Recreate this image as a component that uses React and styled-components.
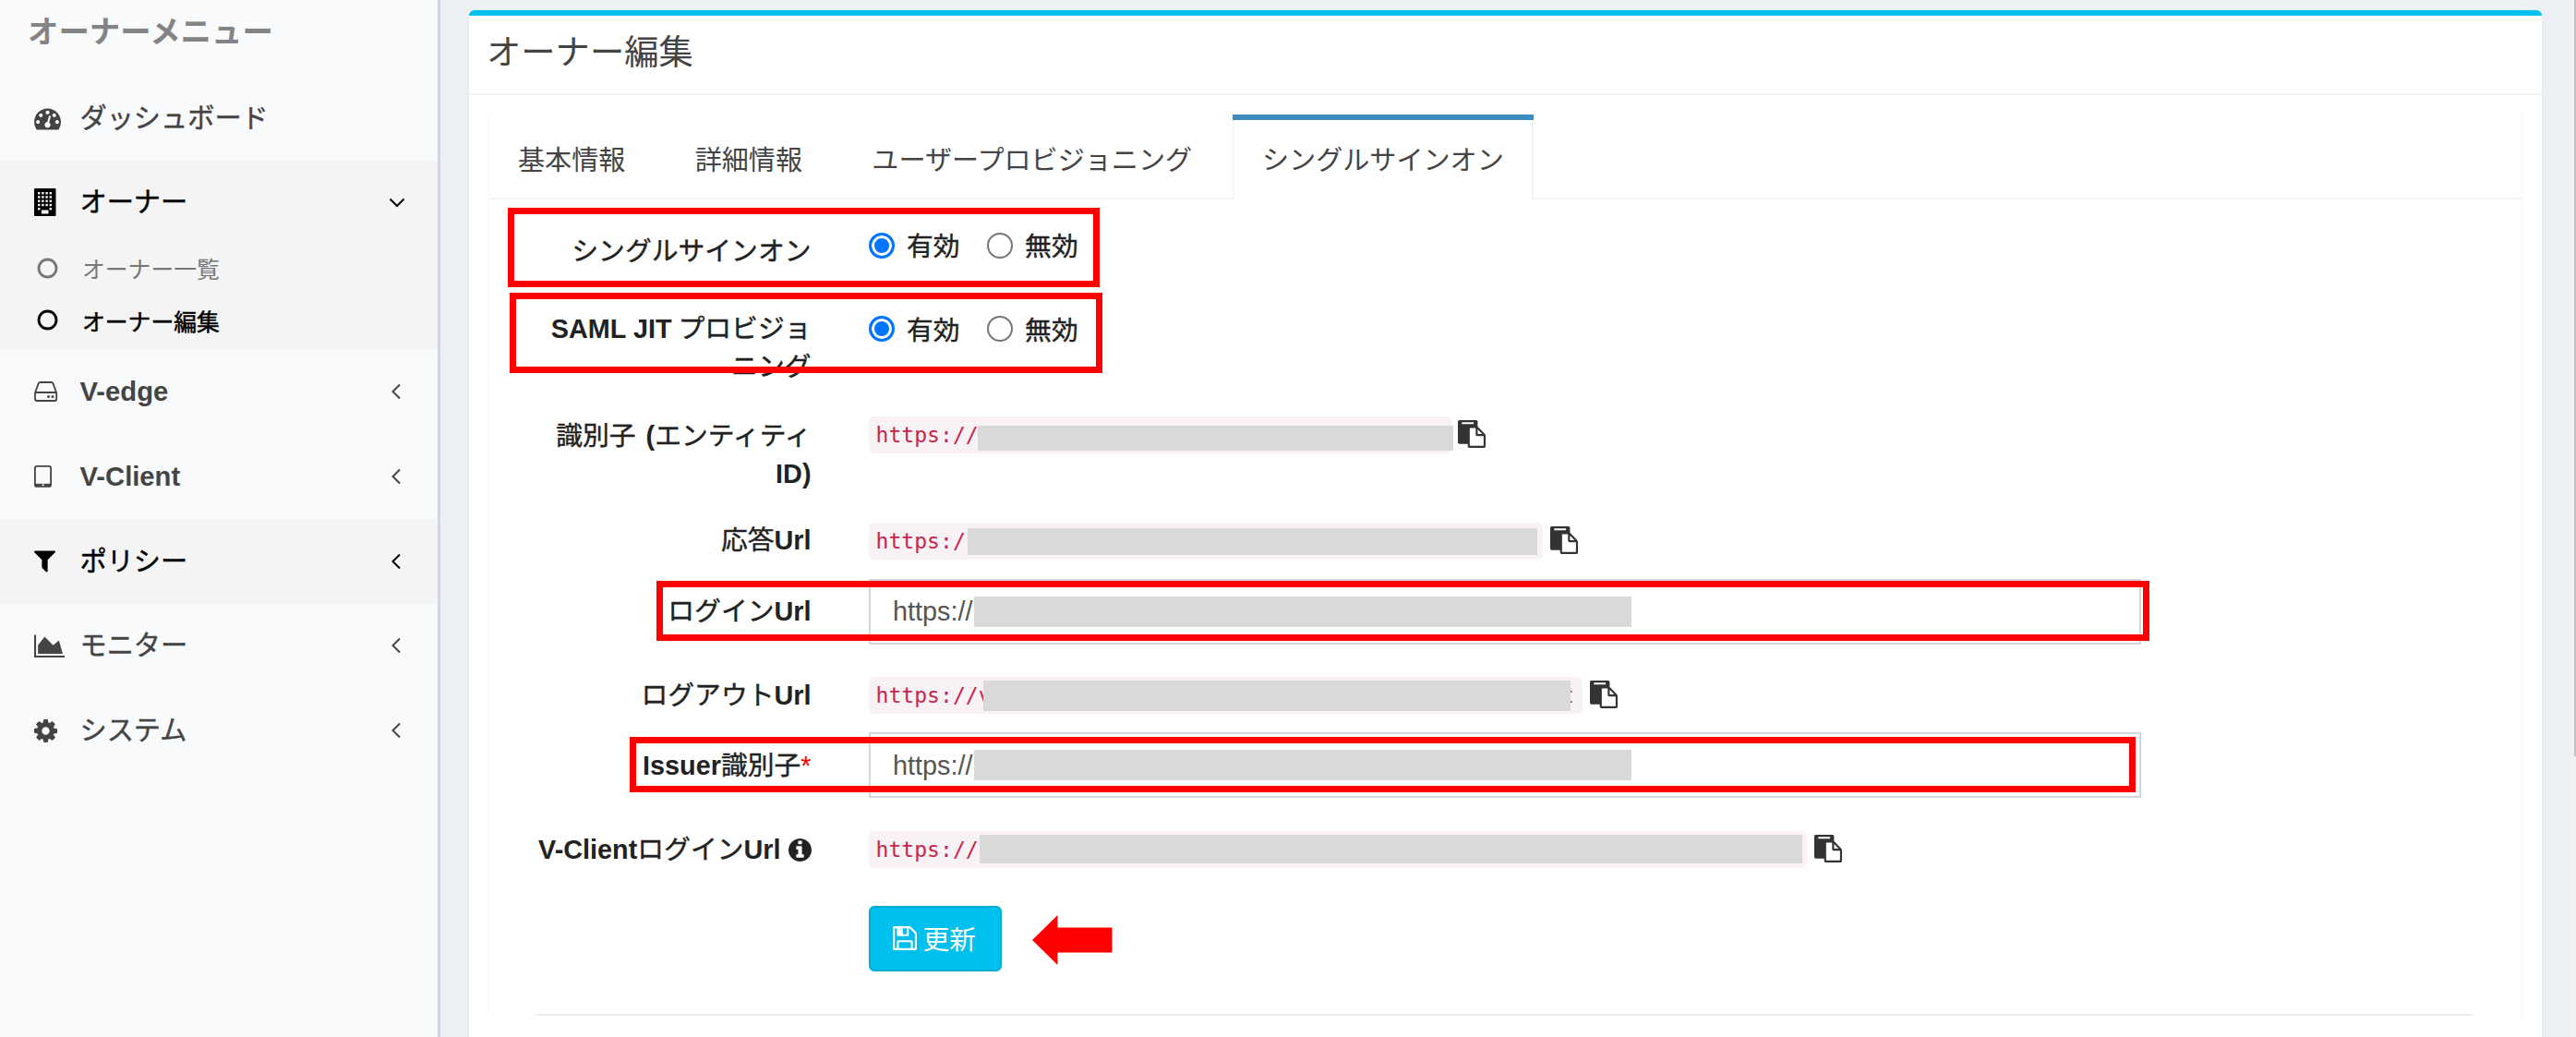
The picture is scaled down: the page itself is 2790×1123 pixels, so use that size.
import React from "react";
import styled, { createGlobalStyle, css } from "styled-components";

const GlobalStyle = createGlobalStyle`
  * {
    box-sizing: border-box;
  }

  body {
    margin: 0;
    overflow: hidden;
    background: #ecf0f5;
    color: #333;
    font-family: "Liberation Sans", "Noto Sans CJK JP", sans-serif;
    font-size: 28.8px;
  }
`;

const Page = styled.div`
  position: relative;
  display: flex;
  width: 2790px;
  height: 1123px;
  overflow: hidden;
`;

/* ---------- sidebar ---------- */

const Sidebar = styled.aside`
  flex: none;
  width: 477px;
  height: 100%;
  background: #f9fafc;
  border-right: 3px solid #d2d6de;
`;

const SidebarTitle = styled.h4`
  margin: 0;
  height: 82px;
  padding-left: 30px;
  font-size: 33.4px;
  line-height: 70px;
  font-weight: bold;
  color: #848484;
`;

const MenuItem = styled.div`
  display: flex;
  align-items: center;
  height: ${props => props.$height || 91.75}px;
  padding: 0 35px 0 37px;
  font-size: 29.2px;
  color: ${props => (props.$active ? "#000" : "#444")};
  background: ${props => (props.$active ? "#f4f4f5" : "none")};
  -webkit-text-stroke: 0.4px;
`;

const MenuIcon = styled.span`
  display: flex;
  align-items: center;
  width: 49.5px;
  padding-top: ${props => props.$drop || 0}px;
`;

const MenuText = styled.span`
  flex: 1;
  line-height: 44px;
`;

const SubMenu = styled.div`
  height: 113.5px;
  background: #f4f4f5;
`;

const SubItem = styled.div`
  display: flex;
  align-items: center;
  height: 56.5px;
  padding: 0 0 6px 40px;
  gap: 26px;
  font-size: 24.8px;
  color: ${props => (props.$active ? "#000" : "#777")};
  ${props => props.$active && css`-webkit-text-stroke: 0.5px;`}
`;

/* Latin runs are set bold, the kana and kanji keep their own weight */
const Latin = styled.b`
  font-weight: bold;
  -webkit-text-stroke: 0;
  margin-right: ${props => props.$after || 0}px;
  margin-left: ${props => props.$before || 0}px;
`;

/* ---------- content box ---------- */

const Content = styled.main`
  flex: 1;
  padding: 11px 31px 0 31px;
`;

const Box = styled.section`
  height: 1200px;
  width: 2244.5px;
  background: #fff;
  border-top: 6px solid #00c0ef;
  border-radius: 6px;
  box-shadow: 0 1px 2px rgba(0, 0, 0, 0.1);
`;

const BoxHeader = styled.h3`
  margin: 0;
  height: 86px;
  padding-left: 19px;
  border-bottom: 2px solid #f4f4f4;
  font-size: 37.3px;
  line-height: 80px;
  font-weight: normal;
  color: #444;
`;

const TabPanel = styled.div`
  margin: 21px 20px 0 19.5px;
  border: solid #fbfbfb;
  border-width: 0 2px;
`;

const Tabs = styled.nav`
  display: flex;
  height: 92px;
  border-bottom: 2px solid #f4f4f4;
`;

const Tab = styled.a`
  height: 92px;
  margin-right: 9.3px;
  padding: ${props => (props.$active ? "0 32px" : "0 34.5px 0 31.5px")};
  border: solid transparent;
  border-width: 6px 0 0;
  font-size: 29.1px;
  line-height: 89px;
  color: #444;
  ${props => props.$active && css`
    background: #fff;
    border-top-color: #3c8dbc;
    box-shadow: inset 2px 0 #f4f4f4, inset -2px 0 #f4f4f4;
  `}
`;

/* ---------- form ---------- */

const Form = styled.div`
  margin: 29px 53px 0 50.5px;
`;

const Row = styled.div`
  display: flex;
  align-items: flex-start;
  height: ${props => props.$height}px;
`;

const Label = styled.label`
  flex: none;
  width: 298.5px;
  margin-right: 62.5px;
  padding-top: ${props => props.$top || 1}px;
  line-height: 41px;
  text-align: right;
  white-space: nowrap;
  color: #222;
  -webkit-text-stroke: 0.4px;
`;

const Required = styled.span`
  color: #f00;
  -webkit-text-stroke: 0;
`;

const Value = styled.div`
  display: flex;
  padding-top: ${props => props.$top || 0}px;
`;

const Option = styled.span`
  display: flex;
  align-items: center;
  height: 40px;
  margin-right: 29.5px;
  color: #222;
  -webkit-text-stroke: 0.4px;
`;

const OptionText = styled.span`
  padding-bottom: 2px;
`;

const Radio = styled.i`
  width: 28px;
  height: 28px;
  margin: 0 13.5px 0 -0.5px;
  border: ${props => (props.$on ? "3px solid #0075ff" : "2px solid #767676")};
  border-radius: 50%;
  background: ${props => (props.$on ? "#0075ff" : "#fff")};
  box-shadow: ${props => (props.$on ? "inset 0 0 0 3px #fff" : "none")};
`;

const Code = styled.code`
  display: flex;
  align-items: center;
  width: ${props => props.$width}px;
  height: 40px;
  padding-left: 7.5px;
  border-radius: 6px;
  background: #f9f2f4;
  color: #c7254e;
  font-family: "DejaVu Sans Mono", monospace;
  font-size: 23.1px;
  line-height: 42px;
`;

const Mask = styled.span`
  position: relative;
  flex: none;
  width: ${props => props.$width}px;
  height: ${props => props.$height}px;
  margin-top: ${props => props.$top || 0}px;
  background: #d9d9d9;
`;

const CodeText = styled.span`
  flex: none;
  width: ${props => props.$width}px;
`;

/* last letter, mostly tucked under the mask before it */
const CodeTail = styled.span`
  margin-left: -10px;
`;

const CopyIcon = styled.span`
  display: flex;
  padding: ${props => props.$top}px 0 0 ${props => props.$left}px;
  color: #333;
`;

const Input = styled.div`
  display: flex;
  align-items: center;
  width: 1378px;
  height: 71px;
  padding-left: 24px;
  border: 2px solid #d2d6de;
  color: #555;
  background: #fff;
`;

const InputText = styled.span`
  width: 87.5px;
  padding-top: 1px;
`;

const Actions = styled.div`
  display: flex;
  align-items: center;
  height: 117px;
  padding: 0 0 46px 361px;
`;

const SaveButton = styled.button`
  display: flex;
  align-items: center;
  width: 144px;
  height: 71px;
  padding: 0 0 2px 24px;
  gap: 6.5px;
  border: 2px solid #00acd6;
  border-radius: 6px;
  background: #00c0ef;
  color: #fff;
  font: inherit;
`;

const Arrow = styled.svg`
  display: block;
  margin: 2px 0 0 33px;
`;

const Divider = styled.hr`
  margin: 0;
  border: 0;
  border-top: 2px solid #eee;
`;

/* red frames drawn over the form */
const Highlight = styled.div`
  position: absolute;
  left: ${props => props.$x}px;
  top: ${props => props.$y}px;
  width: ${props => props.$w}px;
  height: ${props => props.$h}px;
  border: 7px solid #f00;
`;

const Scrollbar = styled.div`
  flex: none;
  width: 7px;
  padding-left: 4px;
  background: #f1f1f1;
`;

const Thumb = styled.div`
  height: 819px;
  background: #c1c1c1;
`;

/* ---------- icons ---------- */

const paths = {
  dashboard:
    "M384 1152q0-53-37.5-90.5t-90.5-37.5-90.5 37.5-37.5 90.5 37.5 90.5 90.5 37.5 90.5-37.5 37.5-90.5zm192-448q0-53-37.5-90.5t-90.5-37.5-90.5 37.5-37.5 90.5 37.5 90.5 90.5 37.5 90.5-37.5 37.5-90.5zm428 481l101-382q6-26-7.5-48.5t-38.5-29.5-48 6.5-30 39.5l-101 382q-60 5-107 43.5t-63 98.5q-20 77 20 146t117 89 146-20 89-117q16-60-6-117t-72-91zm660-33q0-53-37.5-90.5t-90.5-37.5-90.5 37.5-37.5 90.5 37.5 90.5 90.5 37.5 90.5-37.5 37.5-90.5zm-640-640q0-53-37.5-90.5t-90.5-37.5-90.5 37.5-37.5 90.5 37.5 90.5 90.5 37.5 90.5-37.5 37.5-90.5zm448 192q0-53-37.5-90.5t-90.5-37.5-90.5 37.5-37.5 90.5 37.5 90.5 90.5 37.5 90.5-37.5 37.5-90.5zm320 448q0 261-141 483-19 29-54 29h-1402q-35 0-54-29-141-221-141-483 0-182 71-348t191-286 286-191 348-71 348 71 286 191 191 286 71 348z",
  filter:
    "M1595 295q17 41-14 70l-493 493v742q0 42-39 59-13 5-25 5-27 0-45-19l-256-256q-19-19-19-45v-486l-493-493q-31-29-14-70 17-39 59-39h1280q42 0 59 39z",
  area: "M2048 1536v128h-2048v-1536h128v1408h1920zm-384-1024l256 896h-1664v-576l448-576 576 576z",
  cog: "M1152 896q0-106-75-181t-181-75-181 75-75 181 75 181 181 75 181-75 75-181zm512-109v222q0 12-8 23t-20 13l-185 28q-19 54-39 91 35 50 107 138 10 12 10 25t-9 23q-27 37-99 108t-94 71q-12 0-26-9l-138-108q-44 23-91 38-16 136-29 186-7 28-36 28h-222q-14 0-24.5-8.5t-11.5-21.5l-28-184q-49-16-90-37l-141 107q-10 9-25 9-14 0-25-11-126-114-165-168-7-10-7-23 0-12 8-23 15-21 51-66.5t54-70.5q-27-50-41-99l-183-27q-13-2-21-12.5t-8-23.5v-222q0-12 8-23t19-13l186-28q14-46 39-92-40-57-107-138-10-12-10-24 0-10 9-23 26-36 98.5-107.5t94.5-71.5q13 0 26 10l138 107q44-23 91-38 16-136 29-186 7-28 36-28h222q14 0 24.5 8.5t11.5 21.5l28 184q49 16 90 37l142-107q9-9 24-9 13 0 25 10 129 119 165 170 7 8 7 22 0 12-8 23-15 21-51 66.5t-54 70.5q26 50 41 98l183 28q13 2 21 12.5t8 23.5z",
  info: "M1152 1376v-160q0-14-9-23t-23-9h-96v-512q0-14-9-23t-23-9h-320q-14 0-23 9t-9 23v160q0 14 9 23t23 9h96v320h-96q-14 0-23 9t-9 23v160q0 14 9 23t23 9h448q14 0 23-9t9-23zm-128-896v-160q0-14-9-23t-23-9h-192q-14 0-23 9t-9 23v160q0 14 9 23t23 9h192q14 0 23-9t9-23zm640 416q0 209-103 385.5t-279.5 279.5-385.5 103-385.5-103-279.5-279.5-103-385.5 103-385.5 279.5-279.5 385.5-103 385.5 103 279.5 279.5 103 385.5z",
  save: "M512 1536h768v-384h-768v384zm896 0h128v-896q0-14-10-38.5t-20-34.5l-281-281q-10-10-34-20t-39-10v416q0 40-28 68t-68 28h-576q-40 0-68-28t-28-68v-416h-128v1280h128v-416q0-40 28-68t68-28h832q40 0 68 28t28 68v416zm-384-928v-320q0-13-9.5-22.5t-22.5-9.5h-192q-13 0-22.5 9.5t-9.5 22.5v320q0 13 9.5 22.5t22.5 9.5h192q13 0 22.5-9.5t9.5-22.5zm640 32v928q0 40-28 68t-68 28h-1344q-40 0-68-28t-28-68v-1344q0-40 28-68t68-28h928q40 0 88 20t76 48l280 280q28 28 48 76t20 88z",
  paste:
    "M768 1664h896v-640h-416q-40 0-68-28t-28-68v-416h-384v1152zm256-1440v-64q0-13-9.5-22.5t-22.5-9.5h-704q-13 0-22.5 9.5t-9.5 22.5v64q0 13 9.5 22.5t22.5 9.5h704q13 0 22.5-9.5t9.5-22.5zm256 672h299l-299-299v299zm512 128v672q0 40-28 68t-68 28h-960q-40 0-68-28t-28-68v-160h-544q-40 0-68-28t-28-68v-1344q0-40 28-68t68-28h1088q40 0 68 28t28 68v328q21 13 36 28l408 408q28 28 48 76t20 88z"
};

const Glyph = ({ name, box, width, height }) => (
  <svg width={width} height={height} viewBox={box} fill="currentColor" stroke="none">
    <path d={paths[name]} />
  </svg>
);

const BuildingIcon = () => (
  <svg width="24" height="30" viewBox="0 0 24 30">
    <rect width="23.5" height="30" rx="1" fill="currentColor" />
    {[4, 8.2, 12.5, 16.8, 21].map(y =>
      [4, 8.2, 12.4, 16.6].map(x =>
        y === 21 && x > 4 && x < 16 ? null : (
          <rect key={x + "-" + y} x={x} y={y} width="2.4" height="2.4" fill="#f4f4f5" />
        )
      )
    )}
    <rect x="8" y="23.5" width="7.5" height="4" fill="#f4f4f5" />
  </svg>
);

const DriveIcon = () => (
  <svg width="26" height="22" viewBox="0 0 26 22" fill="none" stroke="currentColor" strokeWidth="1.8">
    <path d="M1 12.5L4.6 2.4Q5.1 1 6.6 1h12Q20 1 20.5 2.4L24.2 12.5V19q0 2-2 2H3q-2 0-2-2zM1.4 12h22.4" />
    <circle cx="15.5" cy="16.5" r="1.5" fill="currentColor" stroke="none" />
    <circle cx="20" cy="16.5" r="1.5" fill="currentColor" stroke="none" />
  </svg>
);

const TabletIcon = () => (
  <svg width="19" height="24" viewBox="0 0 19 24">
    <rect x="0.9" y="0.9" width="17.2" height="22" rx="2" fill="none" stroke="currentColor" strokeWidth="1.8" />
    <rect x="1" y="19.8" width="17" height="3.2" fill="currentColor" />
    <rect x="8.6" y="20.4" width="2" height="1.6" fill="#f9fafc" />
  </svg>
);

const RingIcon = () => (
  <svg width="23" height="23" viewBox="0 0 23 23">
    <circle cx="11.5" cy="11.5" r="9.5" fill="none" stroke="currentColor" strokeWidth="2.8" />
  </svg>
);

const Chevron = ({ down }) => (
  <svg
    width="18"
    height="18"
    viewBox="0 0 18 18"
    fill="none"
    stroke="currentColor"
    strokeWidth="2"
  >
    <path d={down ? "M1.5 5.5L9 13L16.5 5.5" : "M12 1.5L4.5 9L12 16.5"} />
  </svg>
);

const LabelInfo = styled.span`
  display: inline-flex;
  margin-left: 8px;
  vertical-align: -3px;
`;

/* ---------- data ---------- */

const menu = [
  { text: <Latin>V-edge</Latin>, icon: <DriveIcon /> },
  { text: <Latin>V-Client</Latin>, icon: <TabletIcon />, drop: -4 },
  {
    text: "ポリシー",
    active: true,
    icon: <Glyph name="filter" box="192 256 1408 1408" width={23} height={24} />
  },
  {
    text: "モニター",
    icon: <Glyph name="area" box="0 128 2048 1536" width={33} height={25.5} />
  },
  {
    text: "システム",
    icon: <Glyph name="cog" box="128 128 1536 1536" width={25} height={25} />
  }
];

const frames = [
  { x: 550, y: 225, w: 641, h: 86 },
  { x: 552, y: 317, w: 642, h: 87 },
  { x: 711, y: 629, w: 1617, h: 65 },
  { x: 682, y: 798, w: 1631, h: 60 }
];

const OnOff = ({ top }) => (
  <Value $top={top}>
    <Option>
      <Radio $on />
      <OptionText>有効</OptionText>
    </Option>
    <Option>
      <Radio />
      <OptionText>無効</OptionText>
    </Option>
  </Value>
);

const CopyButton = ({ left, top = 4 }) => (
  <CopyIcon $left={left} $top={top}>
    <Glyph name="paste" box="0 0 1792 1792" width={30} height={30} />
  </CopyIcon>
);

export default function App() {
  return (
    <Page>
      <GlobalStyle />
      <Sidebar>
        <SidebarTitle>オーナーメニュー</SidebarTitle>
        <MenuItem>
          <MenuIcon $drop={3}>
            <Glyph name="dashboard" box="0 256 1792 1408" width={29} height={24} />
          </MenuIcon>
          <MenuText>ダッシュボード</MenuText>
        </MenuItem>
        <MenuItem $active $height={91}>
          <MenuIcon>
            <BuildingIcon />
          </MenuIcon>
          <MenuText>オーナー</MenuText>
          <Chevron down />
        </MenuItem>
        <SubMenu>
          <SubItem>
            <RingIcon />
            オーナー一覧
          </SubItem>
          <SubItem $active>
            <RingIcon />
            オーナー編集
          </SubItem>
        </SubMenu>
        {menu.map((item, i) => (
          <MenuItem key={i} $active={item.active}>
            <MenuIcon $drop={item.drop}>{item.icon}</MenuIcon>
            <MenuText>{item.text}</MenuText>
            <Chevron />
          </MenuItem>
        ))}
      </Sidebar>

      <Content>
        <Box>
          <BoxHeader>オーナー編集</BoxHeader>
          <TabPanel>
            <Tabs>
              <Tab>基本情報</Tab>
              <Tab>詳細情報</Tab>
              <Tab>ユーザープロビジョニング</Tab>
              <Tab $active>シングルサインオン</Tab>
            </Tabs>

            <Form>
              <Row $height={90}>
                <Label $top={7}>シングルサインオン</Label>
                <OnOff top={0.5} />
              </Row>
              <Row $height={115}>
                <Label>
                  <Latin $after={7}>SAML JIT</Latin>プロビジョ
                  <br />
                  ニング
                </Label>
                <OnOff top={1} />
              </Row>
              <Row $height={114}>
                <Label $top={2}>
                  識別子 <Latin $before={3}>(</Latin>エンティティ
                  <br />
                  <Latin>ID)</Latin>
                </Label>
                <Value $top={1}>
                  <Code $width={631}>
                    <CodeText $width={110.5}>https://</CodeText>
                    <Mask $width={515} $height={27} $top={6} />
                  </Code>
                  <CopyButton left={7} />
                </Value>
              </Row>
              <Row $height={62}>
                <Label>
                  応答<Latin>Url</Latin>
                </Label>
                <Value $top={2}>
                  <Code $width={730}>
                    <CodeText $width={99.5}>https:/</CodeText>
                    <Mask $width={617} $height={29} />
                  </Code>
                  <CopyButton left={8} />
                </Value>
              </Row>
              <Row $height={106}>
                <Label $top={16}>
                  ログイン<Latin>Url</Latin>
                </Label>
                <Value $top={0.5}>
                  <Input>
                    <InputText>https://</InputText>
                    <Mask $width={712} $height={33} />
                  </Input>
                </Value>
              </Row>
              <Row $height={61}>
                <Label>
                  ログアウト<Latin>Url</Latin>
                </Label>
                <Value $top={1}>
                  <Code $width={773}>
                    <CodeText $width={116.5}>https://v</CodeText>
                    <Mask $width={636} $height={33} />
                    <CodeTail>t</CodeTail>
                  </Code>
                  <CopyButton left={8} />
                </Value>
              </Row>
              <Row $height={106}>
                <Label $top={16}>
                  <Latin>Issuer</Latin>識別子<Required>*</Required>
                </Label>
                <Value>
                  <Input>
                    <InputText>https://</InputText>
                    <Mask $width={712} $height={33} />
                  </Input>
                </Value>
              </Row>
              <Row $height={82}>
                <Label>
                  <Latin>V-Client</Latin>ログイン<Latin>Url</Latin>
                  <LabelInfo>
                    <Glyph name="info" box="128 128 1536 1536" width={25} height={25} />
                  </LabelInfo>
                </Label>
                <Value $top={0.5}>
                  <Code $width={1016}>
                    <CodeText $width={112.5}>https://</CodeText>
                    <Mask $width={891} $height={31} />
                  </Code>
                  <CopyButton left={8} />
                </Value>
              </Row>
              <Actions>
                <SaveButton>
                  <Glyph name="save" box="128 128 1536 1536" width={26} height={26} />
                  更新
                </SaveButton>
                <Arrow width="87" height="54" viewBox="0 0 87 54">
                  <path d="M0 27L27.5 0V13.5H86.5V40.5H27.5V54Z" fill="#f00" />
                </Arrow>
              </Actions>
              <Divider />
            </Form>
          </TabPanel>
        </Box>
      </Content>

      <Scrollbar>
        <Thumb />
      </Scrollbar>

      {frames.map(f => (
        <Highlight key={f.y} $x={f.x} $y={f.y} $w={f.w} $h={f.h} />
      ))}
    </Page>
  );
}
